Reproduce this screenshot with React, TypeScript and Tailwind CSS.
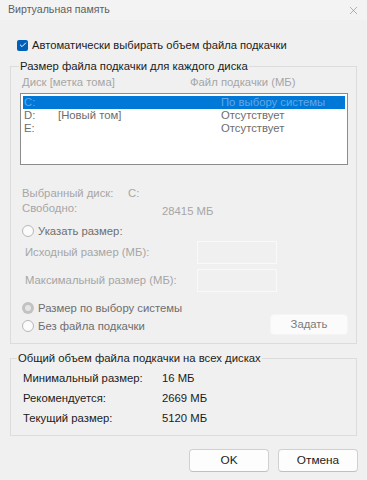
import { X, Check } from "lucide-react"

const font = { fontFamily: '"Liberation Sans", Arial, sans-serif' }

function Radio({ label, checked }: { label: string; checked?: boolean }) {
  return (
    <div className="flex items-center h-[18px] gap-[4px]">
      {checked ? (
        <span className="w-[12px] h-[12px] rounded-full bg-[#c2c2c2] flex items-center justify-center">
          <span className="w-[6px] h-[6px] rounded-full bg-[#e6e6e6]" />
        </span>
      ) : (
        <span className="w-[12px] h-[12px] rounded-full border border-[#b8b8b8] bg-[#fbfbfb]" />
      )}
      <span className="text-[#6e6e6e]">{label}</span>
    </div>
  )
}

export default function App() {
  const disks = [
    { d: "C:", label: "", file: "По выбору системы", selected: true },
    { d: "D:", label: "[Новый том]", file: "Отсутствует" },
    { d: "E:", label: "", file: "Отсутствует" },
  ]

  return (
    <div className="w-[367px] h-[480px] bg-[#f0f0f0] text-[11.3px] text-[#1b1b1b] overflow-hidden" style={font}>
      <div className="h-[20px] bg-[#f3f3f3] flex items-center justify-between pl-[8px] pr-[7px]">
        <span className="text-[#5e5e5e] text-[10.6px]">Виртуальная память</span>
        <X className="w-[13px] h-[13px] text-[#8a8a8a]" strokeWidth={1.2} />
      </div>

      <div className="flex items-center h-[16px] mt-[17px] ml-[17px] gap-[4px]">
        <span className="w-[11px] h-[11px] rounded-[2px] bg-[#005fb8] flex items-center justify-center">
          <Check className="w-[8px] h-[8px] text-white" strokeWidth={3} />
        </span>
        <span className="text-[11.2px]">Автоматически выбирать объем файла подкачки</span>
      </div>

      {/* group: per-disk size */}
      <div className="mx-[10px] mt-[13px] border border-[#dcdcdc] h-[278px] pl-[9px] pr-[8px]">
        <div className="-mt-[9px] -ml-[1px] w-fit px-[1px] leading-[16px] bg-[#f0f0f0]">
          Размер файла подкачки для каждого диска
        </div>
        <div className="flex h-[16px] items-center text-[#a6a6a6] pl-[2px]">
          <span className="w-[168px]">Диск [метка тома]</span>
          <span>Файл подкачки (МБ)</span>
        </div>
        <div className="mt-[3px] h-[72px] border border-[#8c8c8c] bg-white p-[2px]">
          {disks.map((r) => (
            <div
              key={r.d}
              className={`flex h-[13px] items-center leading-[13px] pl-[1px] ${
                r.selected ? "bg-[#0078d7] text-[#62a8e8]" : "text-[#6d6d6d]"
              }`}
            >
              <span className="w-[34px]">{r.d}</span>
              <span className="w-[163px]">{r.label}</span>
              <span>{r.file}</span>
            </div>
          ))}
        </div>

        <div className="mt-[21px] text-[#a6a6a6] pl-[2px]">
          <div className="flex h-[14px] items-center">
            <span className="w-[106px]">Выбранный диск:</span>
            <span>C:</span>
          </div>
          <div className="flex h-[14px] items-start">
            <span className="w-[140px]">Свободно:</span>
            <span className="mt-[3px]">28415 МБ</span>
          </div>
        </div>

        <div className="mt-[8px] pl-[2px]">
          <Radio label="Указать размер:" />
        </div>
        <div className="flex items-center justify-between h-[23px] mt-[1px] pl-[5px] pr-[71px] text-[#a6a6a6]">
          <span>Исходный размер (МБ):</span>
          <span className="w-[80px] h-[23px] border border-[#f9f9f9] bg-[#f0f0f0]" />
        </div>
        <div className="flex items-center justify-between h-[23px] mt-[5px] pl-[5px] pr-[71px] text-[#a6a6a6]">
          <span>Максимальный размер (МБ):</span>
          <span className="w-[80px] h-[23px] border border-[#f9f9f9] bg-[#f0f0f0]" />
        </div>

        <div className="mt-[7px] pl-[2px]">
          <Radio label="Размер по выбору системы" checked />
        </div>
        <div className="flex items-center justify-between pl-[2px]">
          <Radio label="Без файла подкачки" />
          <button className="w-[78px] h-[21px] rounded-[4px] bg-[#fbfbfb] border border-[#f5f5f5] text-[#7a7a7a] -mt-[3px]">
            Задать
          </button>
        </div>
      </div>

      {/* group: totals */}
      <div className="mx-[10px] mt-[14px] border border-[#dcdcdc] h-[78px] pl-[12px]">
        <div className="-mt-[9px] -ml-[6px] w-fit px-[1px] leading-[16px] bg-[#f0f0f0]">
          Общий объем файла подкачки на всех дисках
        </div>
        {[
          ["Минимальный размер:", "16 МБ"],
          ["Рекомендуется:", "2669 МБ"],
          ["Текущий размер:", "5120 МБ"],
        ].map(([k, v], i) => (
          <div key={k} className={`flex h-[20px] items-center ${i === 0 ? "mt-[2px]" : ""}`}>
            <span className="w-[139px]">{k}</span>
            <span>{v}</span>
          </div>
        ))}
      </div>

      <div className="flex justify-end gap-[9px] mt-[13px] pr-[9px]">
        <button className="w-[80px] h-[23px] rounded-[4px] bg-[#fdfdfd] border border-[#d0d0d0] border-b-[#c0c0c0] text-[11.8px]">
          OK
        </button>
        <button className="w-[80px] h-[23px] rounded-[4px] bg-[#fdfdfd] border border-[#d0d0d0] border-b-[#c0c0c0] text-[11.8px]">
          Отмена
        </button>
      </div>
    </div>
  )
}
